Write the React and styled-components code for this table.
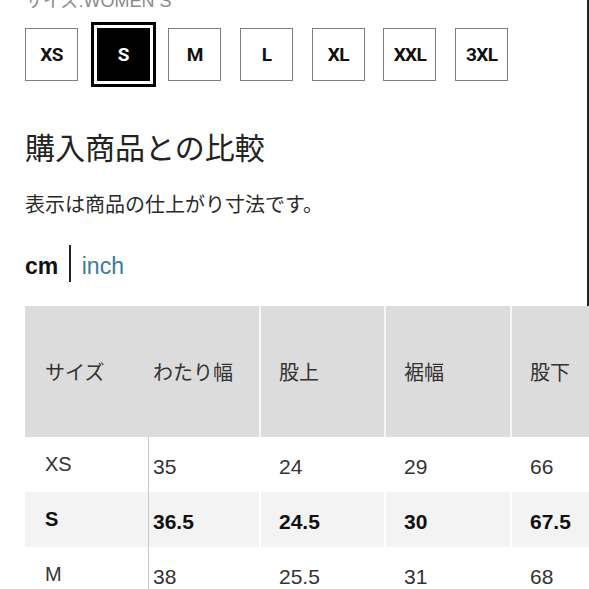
import React from "react";
import styled, { createGlobalStyle, css } from "styled-components";

const GlobalStyle = createGlobalStyle`
  html, body { margin: 0; padding: 0; background: #fff; }
  body {
    font-family: "Liberation Sans", "Noto Sans CJK JP", sans-serif;
    color: #222;
    overflow: hidden;
  }
`;

const Page = styled.div`
  width: 589px;
  height: 589px;
  overflow: hidden;
  background: #fff;
`;

const Top = styled.section`
  display: flex;
  flex-direction: column;
  padding: 0 0 24px 25px;
  border-right: 2px solid #222;
`;

const SizeLabel = styled.div`
  margin-top: -8px;
  font-size: 18px;
  line-height: 18px;
  color: #8a8a8a;
  white-space: nowrap;
`;

const SizeRow = styled.div`
  display: flex;
  align-items: center;
  gap: 18.7px;
  height: 65px;
  margin-top: 12px;
`;

const SizeBox = styled.button`
  box-sizing: border-box;
  width: 53px;
  height: 53px;
  padding: 0;
  display: flex;
  align-items: center;
  justify-content: center;
  border: 1.5px solid #808080;
  background: #fff;
  color: #111;
  font-family: Roboto, "Liberation Sans", sans-serif;
  font-weight: 700;
  font-size: 19px;
  letter-spacing: -0.6px;
  ${(p) =>
    p.$selected &&
    css`
      background: #000;
      color: #fff;
      border-color: #000;
      outline: 3px solid #000;
      outline-offset: 3px;
    `}
`;

const Heading = styled.h2`
  margin: 44px 0 0;
  font-size: 30px;
  line-height: 36px;
  font-weight: 400;
  color: #222;
`;

const Note = styled.p`
  margin: 24px 0 0;
  font-size: 20px;
  line-height: 28px;
  color: #2a2a2a;
`;

const Toggle = styled.div`
  display: flex;
  align-items: flex-end;
  height: 37px;
  margin-top: 26px;
`;

const Unit = styled.span`
  font-size: 23px;
  line-height: 32px;
  font-weight: ${(p) => (p.$active ? 700 : 400)};
  color: ${(p) => (p.$active ? "#111" : "#3b7d99")};
`;

const Divider = styled.span`
  width: 1.5px;
  height: 37px;
  background: #222;
  margin: 0 11px;
`;

const Table = styled.div`
  margin-left: 25px;
`;

const Row = styled.div`
  display: grid;
  grid-template-columns: 124px 110px 125px 126px 1fr;
  height: ${(p) => (p.$head ? 131 : 55)}px;
  background: ${(p) => p.$bg};
`;

const Cell = styled.div`
  box-sizing: border-box;
  display: flex;
  align-items: center;
  padding-left: ${(p) => p.$pad}px;
  padding-top: ${(p) => p.$shift || 0}px;
  border-left: ${(p) => (p.$sep ? `2px solid ${p.$sepColor}` : "none")};
  border-right: ${(p) => (p.$rule ? "1px solid #c9c9c9" : "none")};
  font-size: ${(p) => p.$size}px;
  font-weight: ${(p) => (p.$bold ? 700 : 400)};
  color: ${(p) => (p.$bold ? "#111" : "#333")};
  white-space: nowrap;
`;

const sizes = ["XS", "S", "M", "L", "XL", "XXL", "3XL"];
const headers = ["サイズ", "わたり幅", "股上", "裾幅", "股下"];
const rows = [
  { cells: ["XS", "35", "24", "29", "66"], bold: false, bg: "#fff" },
  { cells: ["S", "36.5", "24.5", "30", "67.5"], bold: true, bg: "#f3f3f3" },
  { cells: ["M", "38", "25.5", "31", "68"], bold: false, bg: "#fff" },
];

const colPad = (i) => (i === 0 ? 20 : i === 1 ? 4 : 18);

export default function App() {
  return (
    <Page>
      <GlobalStyle />
      <Top>
        <SizeLabel>サイズ:WOMEN S</SizeLabel>
        <SizeRow>
          {sizes.map((s) => (
            <SizeBox key={s} $selected={s === "S"}>
              {s}
            </SizeBox>
          ))}
        </SizeRow>
        <Heading>購入商品との比較</Heading>
        <Note>表示は商品の仕上がり寸法です。</Note>
        <Toggle>
          <Unit $active>cm</Unit>
          <Divider />
          <Unit>inch</Unit>
        </Toggle>
      </Top>
      <Table>
        <Row $head $bg="#dcdcdc">
          {headers.map((h, i) => (
            <Cell key={h} $pad={colPad(i)} $size={20} $sep={i >= 2} $sepColor="#f6f6f6">
              {h}
            </Cell>
          ))}
        </Row>
        {rows.map((r) => (
          <Row key={r.cells[0]} $bg={r.bg}>
            {r.cells.map((c, i) => (
              <Cell
                key={i}
                $pad={colPad(i)}
                $size={i === 0 ? 20 : 21}
                $shift={i === 0 ? 0 : 4}
                $bold={r.bold}
                $sep={i >= 2}
                $sepColor="#fff"
                $rule={i === 0}
              >
                {c}
              </Cell>
            ))}
          </Row>
        ))}
      </Table>
    </Page>
  );
}
